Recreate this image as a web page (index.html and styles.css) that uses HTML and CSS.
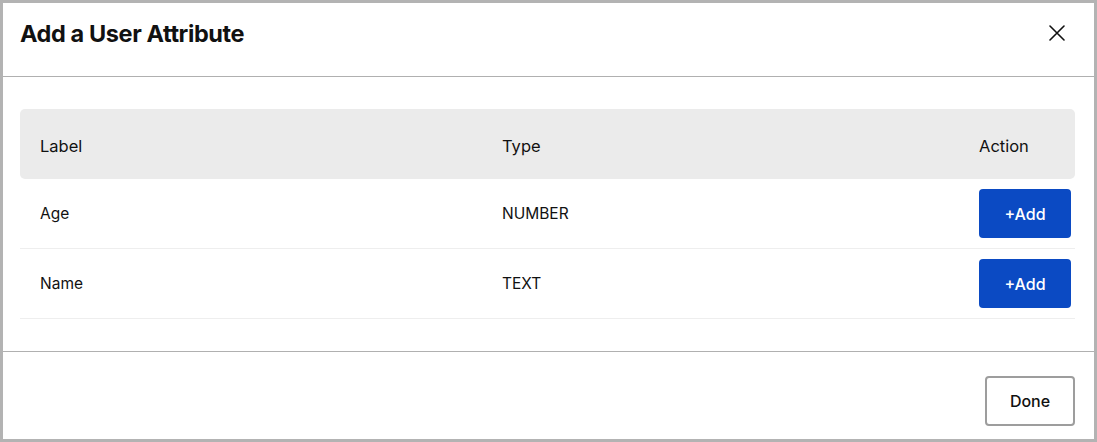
FILE: index.html
```html
<!DOCTYPE html>
<html lang="en">
<head>
<meta charset="utf-8">
<title>Add a User Attribute</title>
<link rel="stylesheet" href="styles.css">
</head>
<body>
<div class="modal">
  <header class="modal-header">
    <h1 class="modal-title">Add a User Attribute</h1>
    <button class="close-btn" aria-label="Close">
      <svg width="16" height="16" viewBox="0 0 16 16"><path d="M1 1 L15 15 M15 1 L1 15" stroke="#111" stroke-width="1.6" fill="none" stroke-linecap="round"/></svg>
    </button>
  </header>
  <section class="modal-body">
    <div class="table">
      <div class="row head">
        <div class="cell">Label</div>
        <div class="cell">Type</div>
        <div class="cell">Action</div>
      </div>
      <div class="row">
        <div class="cell">Age</div>
        <div class="cell">NUMBER</div>
        <div class="cell"><button class="add-btn">+Add</button></div>
      </div>
      <div class="row">
        <div class="cell">Name</div>
        <div class="cell">TEXT</div>
        <div class="cell"><button class="add-btn">+Add</button></div>
      </div>
    </div>
  </section>
  <footer class="modal-footer">
    <button class="done-btn">Done</button>
  </footer>
</div>
</body>
</html>
```
FILE: styles.css
```css
* { box-sizing: border-box; }
html, body { margin: 0; padding: 0; background: #fff; }
body { font-family: Inter, "Noto Sans", "Liberation Sans", sans-serif; color: #111; }
.modal {
  width: 1097px;
  height: 442px;
  border: 3px solid #b3b3b3;
  display: flex;
  flex-direction: column;
}
.modal-header {
  height: 74px;
  border-bottom: 1px solid #b0b0b0;
  display: flex;
  justify-content: space-between;
  align-items: flex-start;
  padding: 16px 29px 0 17px;
}
.modal-title {
  margin: 0;
  font-size: 23.5px;
  line-height: 30px;
  font-weight: 700;
  letter-spacing: -0.4px;
}
.close-btn {
  margin-top: 6px;
  border: 0;
  background: none;
  padding: 0;
  width: 16px;
  height: 16px;
  display: flex;
}
.modal-body {
  padding: 32px 19px 32px 17px;
  border-bottom: 1px solid #b0b0b0;
}
.table { display: flex; flex-direction: column; }
.row {
  display: grid;
  grid-template-columns: 462px 477px 1fr;
  height: 70px;
  align-items: center;
  border-bottom: 1px solid #eeeeee;
  font-size: 15.5px;
}
.row.head {
  background: #ebebeb;
  border-bottom: 0;
  border-radius: 5px;
  font-size: 16.5px;
  padding-top: 3px;
}
.cell { padding-left: 20px; }
.add-btn {
  width: 92px;
  height: 49px;
  border: 0;
  border-radius: 4px;
  background: #0b4ac3;
  color: #fff;
  font-family: inherit;
  font-size: 16px;
  font-weight: 500;
}
.modal-footer {
  flex: 1;
  display: flex;
  justify-content: flex-end;
  align-items: flex-start;
  padding: 24px 19px 0 0;
}
.done-btn {
  width: 90px;
  height: 50px;
  border: 2px solid #9d9d9d;
  border-radius: 4px;
  background: #fff;
  color: #111;
  font-family: inherit;
  font-size: 16px;
  font-weight: 500;
}
```
